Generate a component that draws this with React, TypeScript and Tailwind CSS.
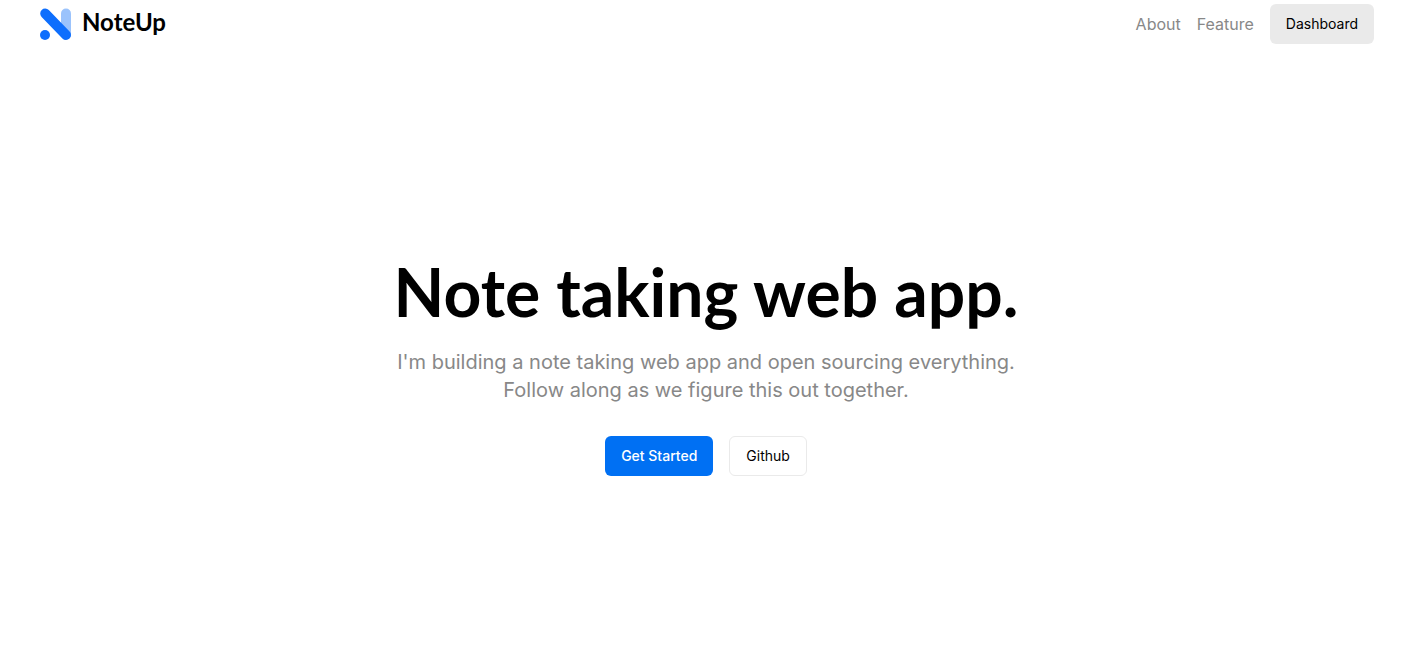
import React from 'react';

function Logo() {
  return (
    <svg viewBox="0 0 32 32" className="size-8" aria-hidden="true">
      <rect x="21" y="0.5" width="10" height="31" rx="5" fill="#9bc3fc" />
      <path d="M5.2 5.5 L26 27" stroke="#0d6efd" strokeWidth="10" strokeLinecap="round" />
      <circle cx="5" cy="27" r="5" fill="#0d6efd" />
    </svg>
  );
}

export default function App() {
  return (
    <div className="flex min-h-screen flex-col bg-white font-['Inter',sans-serif] text-black">
      <header className="flex h-12 items-center justify-between pr-[42px] pl-10">
        <a href="#home" className="flex items-center gap-2.5">
          <Logo />
          <span className="pb-1 font-['Lato',sans-serif] text-2xl font-bold">NoteUp</span>
        </a>
        <nav className="flex items-center gap-4 text-[#888888]">
          <a href="#about">About</a>
          <a href="#feature">Feature</a>
          <button type="button" className="h-10 rounded-md bg-[#eaeaea] px-4 text-sm text-black">Dashboard</button>
        </nav>
      </header>
      <main className="flex grow flex-col items-center pt-52 pr-5 pl-4 text-center">
        <h1 className="font-['Lato',sans-serif] text-[66px] leading-[72px] font-bold">Note taking web app.</h1>
        <p className="mt-5 max-w-[640px] text-xl leading-7 text-[#888888]">
          I'm building a note taking web app and open sourcing everything. Follow along as we figure this out together.
        </p>
        <div className="mt-8 flex gap-4">
          <button type="button" className="h-10 rounded-md bg-[#0070f3] px-4 text-sm font-medium text-white">Get Started</button>
          <button type="button" className="h-10 rounded-md border border-[#eaeaea] bg-white px-4 text-sm">Github</button>
        </div>
      </main>
    </div>
  );
}
